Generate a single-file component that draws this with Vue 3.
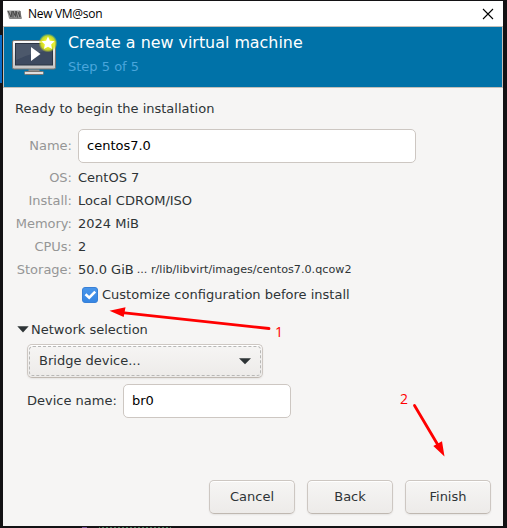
<script setup>
import { ref } from 'vue'

const name = ref('centos7.0')
const device = ref('br0')
const customize = ref(true)
const details = [
  { label: 'OS:', value: 'CentOS 7' },
  { label: 'Install:', value: 'Local CDROM/ISO' },
  { label: 'Memory:', value: '2024 MiB' },
  { label: 'CPUs:', value: '2' },
  { label: 'Storage:', value: '50.0 GiB', path: '... r/lib/libvirt/images/centos7.0.qcow2' },
]
const actions = ['Cancel', 'Back', 'Finish']
</script>

<template>
  <div class="desktop">
    <i class="edge-accent"></i>
    <i class="terminal"></i>
    <main class="window">
      <header class="titlebar">
        <svg class="app-icon" width="15" height="9" viewBox="0 0 15 9">
          <path d="M0 .5h13l2 8H2z" fill="#9a9a9a" />
          <path d="M1 1l3 6 1-6M6 7.500V1l2.500 5.500L9 1l1.500 6.500M11 2l2 5V1" fill="none" stroke="#454545" stroke-width="1" />
          <path d="M2.500 8.200h12" stroke="#666" stroke-width="1" />
        </svg>
        <span class="title">New VM@son</span>
        <svg class="close" width="12" height="12" viewBox="0 0 12 12">
          <path d="M1 1l10 10M11 1L1 11" stroke="#000" stroke-width="1.1" />
        </svg>
      </header>

      <section class="banner">
        <svg class="vm-icon" width="48" height="46" viewBox="0 0 48 46">
          <defs>
            <linearGradient id="frame" x1="0" y1="0" x2="0" y2="1">
              <stop offset="0" stop-color="#fafafa" />
              <stop offset="1" stop-color="#c4c4c4" />
            </linearGradient>
            <radialGradient id="glow">
              <stop offset=".4" stop-color="#f0f424" />
              <stop offset=".75" stop-color="#dfe81c" stop-opacity=".85" />
              <stop offset="1" stop-color="#c8d820" stop-opacity="0" />
            </radialGradient>
          </defs>
          <rect x=".5" y="6.500" width="43" height="28.500" rx="1.500" fill="url(#frame)" stroke="#77736f" />
          <rect x="3.500" y="9.500" width="37" height="21.500" fill="#3d4a60" stroke="#2b3443" />
          <path d="M4 10h36v6C29 17 17 20 4 26z" fill="#5a6474" opacity=".55" />
          <path d="M19 13v14l9.500-7z" fill="#fff" />
          <path d="M16.500 35.500h11v3h-11z" fill="#8d8d8d" />
          <rect x="12.500" y="37.500" width="19" height="3" rx="1" fill="#dedede" stroke="#77736f" />
          <circle cx="36" cy="9" r="9.500" fill="url(#glow)" />
          <path d="M36 2.500l1.900 4.300 4.700.5-3.500 3.200 1 4.600-4.100-2.400-4.100 2.400 1-4.600-3.500-3.200 4.700-.5z" fill="#fff" />
        </svg>
        <div class="heading">
          <h1>Create a new virtual machine</h1>
          <p>Step 5 of 5</p>
        </div>
      </section>

      <section class="content">
        <p class="ready">Ready to begin the installation</p>
        <div class="row name-row">
          <label class="label" for="vm-name">Name:</label>
          <input id="vm-name" v-model="name" class="entry name" />
        </div>
        <div v-for="item in details" :key="item.label" class="row">
          <span class="label">{{ item.label }}</span>
          <span>{{ item.value }}</span>
          <span v-if="item.path" class="path">{{ item.path }}</span>
        </div>
        <label class="customize">
          <input v-model="customize" type="checkbox" class="native" />
          <svg class="check" width="16" height="16" viewBox="0 0 16 16">
            <defs>
              <linearGradient id="tick" x1="0" y1="0" x2="0" y2="1">
                <stop offset="0" stop-color="#4a96ea" />
                <stop offset="1" stop-color="#3585e3" />
              </linearGradient>
            </defs>
            <rect x=".5" y=".5" width="15" height="15" rx="2.500" fill="url(#tick)" stroke="#3980d6" />
            <path v-if="customize" d="M3.500 7.200l3.700 3.500 6-6" fill="none" stroke="#fff" stroke-width="2.600" />
          </svg>
          <span>Customize configuration before install</span>
        </label>

        <div class="expander">
          <svg width="12" height="7" viewBox="0 0 12 7"><path d="M.3.200h11.400L6 6.500z" fill="#2e3436" /></svg>
          <span>Network selection</span>
        </div>
        <button class="combo">
          <span>Bridge device...</span>
          <svg class="arrow" width="12" height="7" viewBox="0 0 12 7"><path d="M0 .200h12L6 6.300z" fill="#2e3436" /></svg>
        </button>
        <div class="device">
          <label for="device">Device name:</label>
          <input id="device" v-model="device" class="entry dev" />
        </div>
      </section>

      <footer class="actions">
        <button v-for="action in actions" :key="action" class="button">{{ action }}</button>
      </footer>
    </main>

    <svg class="annotations" width="507" height="528" viewBox="0 0 507 528">
      <g stroke="#f00" stroke-width="2.800" stroke-linecap="round">
        <path d="M120 312.300L269 328.500" />
        <path d="M414.500 405.500L438.500 446" />
      </g>
      <path d="M109.500 310.700l16-3.500-1.800 9.700zM444.500 456.500l-11.200-10.500 8.700-4.800z" fill="#f00" />
    </svg>
    <span class="mark one">1</span>
    <span class="mark two">2</span>
  </div>
</template>

<style>
body {
  background: #111113;
}
</style>

<style scoped>
* {
  box-sizing: border-box;
}

.desktop {
  position: relative;
  width: 507px;
  height: 528px;
  padding: 1px 4px 2px 3px;
  overflow: hidden;
  background: #131214;
  font: 13px/23px "DejaVu Sans", sans-serif;
  color: #2e3436;
}

.edge-accent {
  position: absolute;
  left: 0;
  top: 35px;
  width: 2px;
  height: 48px;
  background: #0b6bc4;
}

.terminal {
  position: absolute;
  left: 82px;
  top: 527px;
  width: 89px;
  height: 1px;
  background: linear-gradient(90deg, #715296 0 5px, #151316 5px 17px, transparent 17px), repeating-linear-gradient(90deg, #467f5b 0 2px, #151316 2px 4px);
}

.window {
  position: relative;
  display: flex;
  flex-direction: column;
  width: 500px;
  height: 525px;
  background: #f6f5f4;
}

.titlebar {
  display: flex;
  align-items: center;
  height: 25px;
  padding: 0 9px 0 4px;
  background: #fff;
  color: #000;
}

.app-icon {
  margin-top: 1px;
}

.title {
  flex: 1;
  margin-left: 6px;
  font: 12px/24px "Open Sans", sans-serif;
  letter-spacing: -.3px;
}

.banner {
  display: flex;
  height: 62px;
  padding: 7px 0 0 8px;
  border: 1px solid #c3c0ba;
  background: #0072a8;
}

.vm-icon {
  flex: none;
}

.heading {
  margin-left: 8px;
}

h1,
p {
  margin: 0;
  font-weight: 400;
}

h1 {
  margin-top: -3px;
  font-size: 15.900px;
  line-height: 24px;
  color: #fff;
}

.heading p {
  line-height: 24px;
  color: #4aa6dc;
}

.content {
  padding: 9px 12px 0;
}

.ready {
  height: 32px;
  line-height: 24px;
}

.row {
  display: flex;
  height: 23px;
}

.name-row {
  align-items: center;
  height: 34px;
  margin-bottom: 3px;
}

.name-row .label {
  margin-top: -2px;
}

.label {
  width: 57px;
  margin-right: 6px;
  text-align: right;
  color: #959696;
}

.path {
  margin-left: 3px;
  font-size: 11.200px;
}

.entry {
  height: 34px;
  padding: 0 8px 1px;
  border: 1px solid #cdc7c2;
  border-radius: 5px;
  background: #fff;
  color: #000;
  font: inherit;
  outline: 0;
}

.entry.name {
  width: 338px;
}

.customize {
  display: flex;
  align-items: center;
  height: 23px;
  margin: 2px 0 0 67px;
}

.native {
  position: absolute;
  opacity: 0;
}

.check {
  margin-right: 4px;
}

.expander {
  display: flex;
  align-items: center;
  gap: 2px;
  height: 23px;
  margin: 12px 0 3px 2px;
}

.combo,
.button {
  border: 1px solid #cdc7c2;
  border-bottom-color: #bfb8b1;
  border-radius: 5px;
  background: linear-gradient(#f6f5f4, #edebe9);
  box-shadow: inset 0 1px #fff, 0 1px 2px rgba(0, 0, 0, .07);
  color: #2e3436;
  font: inherit;
}

.combo {
  position: relative;
  display: flex;
  align-items: center;
  justify-content: space-between;
  width: 236px;
  height: 34px;
  margin-left: 12px;
  padding: 0 11px 1px;
}

.arrow {
  margin-top: 1px;
}

.combo::after {
  content: "";
  position: absolute;
  inset: 1px;
  border: 1px dashed #b8b8b6;
  border-radius: 4px;
}

.device {
  display: flex;
  align-items: center;
  margin: 6px 0 0 12px;
}

.device label {
  width: 96px;
  margin-top: -2px;
}

.entry.dev {
  width: 168px;
}

.actions {
  display: flex;
  justify-content: flex-end;
  gap: 12px;
  margin-top: auto;
  padding: 0 12px 12px 0;
}

.button {
  width: 86px;
  height: 34px;
  padding: 0 0 1px;
}

.annotations {
  position: absolute;
  inset: 0;
  pointer-events: none;
}

.mark {
  position: absolute;
  font: 14px/18px "Open Sans", sans-serif;
  color: #f00;
}

.one {
  left: 275px;
  top: 323px;
}

.two {
  left: 400px;
  top: 390px;
}
</style>
